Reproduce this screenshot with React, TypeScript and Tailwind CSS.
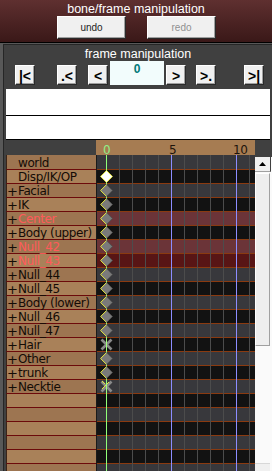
import React from "react";

type Row = { name: string; plus: boolean; red?: boolean; key?: "none" | "white" | "d" | "x" | "xy" };

const rows: Row[] = [
  { name: "world", plus: false, key: "none" },
  { name: "Disp/IK/OP", plus: false, key: "white" },
  { name: "Facial", plus: true, key: "d" },
  { name: "IK", plus: true, key: "d" },
  { name: "Center", plus: true, red: true, key: "d" },
  { name: "Body (upper)", plus: true, key: "d" },
  { name: "Null_42", plus: true, red: true, key: "d" },
  { name: "Null_43", plus: true, red: true, key: "d" },
  { name: "Null_44", plus: true, key: "d" },
  { name: "Null_45", plus: true, key: "d" },
  { name: "Body (lower)", plus: true, key: "d" },
  { name: "Null_46", plus: true, key: "d" },
  { name: "Null_47", plus: true, key: "d" },
  { name: "Hair", plus: true, key: "x" },
  { name: "Other", plus: true, key: "d" },
  { name: "trunk", plus: true, key: "d" },
  { name: "Necktie", plus: true, key: "xy" },
];
const allRows: Row[] = [...rows];
while (allRows.length < 23) allRows.push({ name: "", plus: false, key: "none" });

function gridBg(i: number) {
  if (i === 4 || i === 6) return "bg-[#6b3438]";
  if (i === 7) return "bg-[#581515]";
  return i % 2 === 0 ? "bg-[#38383c]" : "bg-[#121212]";
}

function Key({ kind }: { kind: Row["key"] }) {
  if (!kind || kind === "none") return null;
  if (kind === "white" || kind === "d") {
    const fill = kind === "white" ? "#ffffff" : "#7a7a7a";
    return (
      <svg className="absolute left-[3px] top-0 z-10" width="13" height="13" viewBox="0 0 13 13">
        <polygon points="6.5,0.6 12.4,6.5 6.5,12.4 0.6,6.5" fill={fill} />
        <polyline points="6.5,0.6 0.6,6.5 6.5,12.4" stroke="#e8e83c" strokeWidth="1" fill="none" />
        <polyline points="6.5,0.6 12.4,6.5 6.5,12.4" stroke={kind === "white" ? "#e8e83c" : "#505050"} strokeWidth="1" fill="none" />
      </svg>
    );
  }
  return (
    <svg className="absolute left-[3px] top-0 z-10" width="13" height="13" viewBox="0 0 13 13">
      <line x1="1.5" y1="1.5" x2="11.5" y2="11.5" stroke="#8a8a8a" strokeWidth="2.6" />
      <line x1="11.5" y1="1.5" x2="1.5" y2="11.5" stroke="#8a8a8a" strokeWidth="2.6" />
      {kind === "xy" ? (
        <>
          <line x1="2" y1="9" x2="9" y2="2" stroke="#e8e83c" strokeWidth="1" />
          <line x1="2" y1="1" x2="5" y2="4" stroke="#e8e83c" strokeWidth="1" />
          <line x1="6.5" y1="4" x2="6.5" y2="13" stroke="#a0ff80" strokeWidth="1" />
        </>
      ) : (
        <line x1="6.5" y1="0" x2="6.5" y2="13" stroke="#a0ff80" strokeWidth="1" />
      )}
    </svg>
  );
}

function Btn3D({ children, className }: { children: React.ReactNode; className: string }) {
  return (
    <div
      className={`flex items-center justify-center bg-[#f0f0f0] border border-t-white border-l-white border-r-[#2a2a2a] border-b-[#2a2a2a] shadow-[inset_-1px_-1px_0_#a0a0a0] ${className}`}
    >
      {children}
    </div>
  );
}

const gridLines = Array.from({ length: 12 }, (_, k) => k);

export default function App() {
  return (
    <div className="w-[272px] h-[471px] overflow-hidden bg-[#585858] font-['Liberation_Sans',Arial,sans-serif]">
      {/* top panel */}
      <div className="h-[43px] bg-gradient-to-b from-[#5f3030] to-[#3a1818] border-b border-black">
        <div className="pt-[2px] h-[16px] text-center text-white text-[12.5px] leading-[14px]">
          bone/frame manipulation
        </div>
        <div className="flex">
          <Btn3D className="ml-[57px] w-[69px] h-[23px] text-[10px] text-[#1e1e1e]">undo</Btn3D>
          <Btn3D className="ml-[21px] w-[69px] h-[23px] text-[10px] text-[#909090]">redo</Btn3D>
        </div>
      </div>

      {/* frame panel */}
      <div className="mt-[1px] ml-[3px] h-[427px] border-t border-l border-[#262626] bg-[#404040] flex flex-col">
        <div className="pt-[2px] h-[16px] text-center text-white text-[12.5px] leading-[14px]">
          frame manipulation
        </div>
        <div className="flex items-end h-[24px] text-black font-bold text-[14px]">
          <Btn3D className="ml-[11px] w-[20px] h-[20px] pt-[2px]">|&lt;</Btn3D>
          <Btn3D className="ml-[22px] w-[20px] h-[20px] pt-[2px]">.&lt;</Btn3D>
          <Btn3D className="ml-[11px] w-[20px] h-[20px] pt-[2px]">&lt;</Btn3D>
          <div className="ml-[2px] w-[54px] h-[24px] bg-[#f2fcfc] text-[#007878] text-[12px] leading-[14px] pt-[1px] text-center">
            0
          </div>
          <Btn3D className="ml-[2px] w-[20px] h-[20px] pt-[2px]">&gt;</Btn3D>
          <Btn3D className="ml-[10px] w-[20px] h-[20px] pt-[2px]">&gt;.</Btn3D>
          <Btn3D className="ml-[28px] w-[20px] h-[20px] pt-[2px]">&gt;|</Btn3D>
        </div>
        <div className="mt-[4px] ml-[2px] w-[264px] h-[27px] bg-white border-b border-black" />
        <div className="ml-[2px] w-[264px] h-[24px] bg-white border-b border-black" />

        {/* timeline */}
        <div className="flex flex-1 min-h-0 overflow-hidden">
          {/* names */}
          <div className="ml-[2px] w-[90px] flex flex-col font-['DejaVu_Sans',sans-serif] text-[12px] tracking-[-0.4px]">
            <div className="h-[15px] shrink-0" />
            {allRows.map((r, i) => (
              <div
                key={i}
                className={`shrink-0 flex border-l border-l-[#3a2418] border-b border-b-[#6c0a0a] whitespace-nowrap leading-[13px] ${
                  i === 0 ? "h-[15px] pt-[2px]" : "h-[14px] pt-[1px]"
                } ${i % 2 === 0 ? "bg-[#9d7551]" : "bg-[#a98159]"} ${r.red ? "text-[#ff5a5a]" : "text-[#140c06]"}`}
              >
                <span className="w-[11px] text-[13px] text-[#140c06]">{r.plus ? "+" : ""}</span>
                <span>{r.name}</span>
              </div>
            ))}
          </div>

          {/* grid */}
          <div className="w-[159px] flex flex-col">
            <div className="relative h-[15px] shrink-0 bg-[#a67c52] font-['DejaVu_Sans',sans-serif] text-[12px] leading-[15px] tracking-[-0.5px]">
              <span className="absolute left-[7px] top-[3px] text-[#90ee88]">0</span>
              <span className="absolute left-[73px] top-[3px] text-[#1e140c]">5</span>
              <span className="absolute left-[137px] top-[3px] text-[#1e140c]">10</span>
            </div>
            <div className="relative flex-1 border-l border-[#1a1a1a] overflow-hidden">
              {allRows.map((r, i) => (
                <div
                  key={i}
                  className={`relative shrink-0 border-b border-[#8a3a10] ${i === 0 ? "h-[15px]" : "h-[14px]"} ${gridBg(i)}`}
                >
                  <Key kind={r.key} />
                </div>
              ))}
              {gridLines.map((k) => (
                <div
                  key={k}
                  className={`absolute top-0 bottom-0 w-px ${
                    k === 0 ? "bg-[#90ff78]" : k === 5 || k === 10 ? "bg-[#8c8cff]" : "bg-[#4c4c4c]"
                  }`}
                  style={{ left: 9 + 13 * k }}
                />
              ))}
            </div>
          </div>

          {/* scrollbar */}
          <div className="w-[17px] flex flex-col">
            <div className="h-[17px] shrink-0" />
            <div className="flex-1 flex flex-col bg-[#fafafa]">
              <div className="w-[16px] h-[15px] shrink-0 bg-[#f0f0f0] border-r border-r-[#404040] border-b border-b-[#a0a0a0] flex items-center justify-center">
                <svg width="7" height="4" viewBox="0 0 7 4">
                  <polygon points="3.5,0 7,4 0,4" fill="#000" />
                </svg>
              </div>
              <div className="mt-[1px] w-[15px] h-[173px] shrink-0 bg-[#eeeeee] border border-t-white border-l-white border-r-[#a0a0a0] border-b-[#a0a0a0]" />
              <div className="flex-1" />
              <div className="w-[15px] h-[8px] shrink-0 bg-[#f0f0f0] border-t border-[#d8d8d8]" />
            </div>
          </div>
        </div>
      </div>
    </div>
  );
}
